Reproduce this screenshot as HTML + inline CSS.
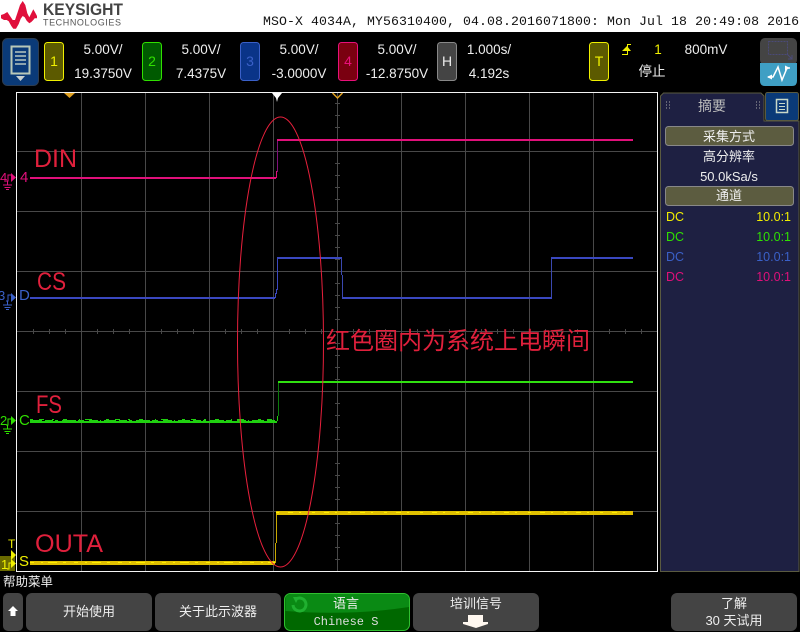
<!DOCTYPE html>
<html><head><meta charset="utf-8"><style>
html,body{margin:0;padding:0;background:#000;width:800px;height:632px;overflow:hidden}
svg{display:block}
text{font-family:"Liberation Sans","WenQuanYi Zen Hei","Noto Sans CJK SC",sans-serif}
.w{fill:#eee;font-size:13.5px}
.m{font-size:13px;fill:#eee;text-anchor:middle}
</style></head><body>
<svg width="800" height="632" viewBox="0 0 800 632" xmlns="http://www.w3.org/2000/svg">
<rect width="800" height="632" fill="#000"/>
<rect width="800" height="32" fill="#fff"/>
<!-- logo -->
<polygon points="1,15 4,14 7.300,12 10,16 12.700,20 15,20 17.300,13.300 20,5 22.700,1 25.300,5 27.300,13.300 29.300,17.300 31.300,13.300 33.300,9.300 35.300,12.700 37,16 37,18.300 34.700,18.300 33.300,20 31.300,22 29.300,23.300 26.700,20.700 24.700,17.300 22.700,16 20.700,18.700 18.700,24 16,28.700 13.300,28.700 11.300,26 8.700,21.300 6.700,20 4,20 1,18.300" fill="#e0103c"/>
<text x="43" y="15" font-size="16.500" font-weight="bold" fill="#444" textLength="80" lengthAdjust="spacingAndGlyphs">KEYSIGHT</text>
<text x="43" y="25.500" font-size="9" fill="#555" textLength="78" lengthAdjust="spacing">TECHNOLOGIES</text>
<text x="263" y="25" font-size="13.200" fill="#111" textLength="536" lengthAdjust="spacing" style="font-family:'Liberation Mono',monospace">MSO-X 4034A, MY56310400, 04.08.2016071800: Mon Jul 18 20:49:08 2016</text>

<!-- menu button -->
<rect x="2.500" y="38.500" width="36" height="47" rx="5" fill="#0a3a78" stroke="#2c3c50"/>
<rect x="11.500" y="46.500" width="18" height="27" fill="#0a3a78" stroke="#b8c8b8" stroke-width="2"/>
<path d="M15 52h11M15 56h11M15 60h11M15 64h11" stroke="#b8c8c0" stroke-width="1.500"/>
<polygon points="16,76 25,76 20.500,81" fill="#c8d0d0"/>

<!-- channel boxes -->
<g stroke-width="1">
<rect x="44.500" y="42.500" width="19" height="38" rx="3" fill="#5c5a00" stroke="#f0f000"/>
<rect x="142.500" y="42.500" width="19" height="38" rx="3" fill="#005a00" stroke="#30e000"/>
<rect x="240.500" y="42.500" width="19" height="38" rx="3" fill="#0a3488" stroke="#3a60c8"/>
<rect x="338.500" y="42.500" width="19" height="38" rx="3" fill="#7a0010" stroke="#e8107a"/>
<rect x="437.500" y="42.500" width="19" height="38" rx="3" fill="#444" stroke="#888"/>
<rect x="589.500" y="42.500" width="19" height="38" rx="3" fill="#5c5a00" stroke="#f0f000"/>
</g>
<g font-size="14">
<text x="54" y="66" fill="#f0f000" text-anchor="middle">1</text>
<text x="152" y="66" fill="#30e000" text-anchor="middle">2</text>
<text x="250" y="66" fill="#3a60c8" text-anchor="middle">3</text>
<text x="348" y="66" fill="#e8107a" text-anchor="middle">4</text>
<text x="447" y="66" fill="#eee" text-anchor="middle">H</text>
<text x="599" y="66" fill="#f0f000" text-anchor="middle">T</text>
</g>
<g class="w">
<text x="103" y="54" text-anchor="middle" class="w">5.00V/</text>
<text x="103" y="78" text-anchor="middle" class="w">19.3750V</text>
<text x="201" y="54" text-anchor="middle" class="w">5.00V/</text>
<text x="201" y="78" text-anchor="middle" class="w">7.4375V</text>
<text x="299" y="54" text-anchor="middle" class="w">5.00V/</text>
<text x="299" y="78" text-anchor="middle" class="w">-3.0000V</text>
<text x="397" y="54" text-anchor="middle" class="w">5.00V/</text>
<text x="397" y="78" text-anchor="middle" class="w">-12.8750V</text>
<text x="489" y="54" text-anchor="middle" class="w">1.000s/</text>
<text x="489" y="78" text-anchor="middle" class="w">4.192s</text>
<text x="706" y="54" text-anchor="middle" class="w">800mV</text>
<text x="652" y="76" text-anchor="middle" class="w">停止</text>
</g>
<text x="658" y="54" fill="#f0f000" font-size="13.500" text-anchor="middle">1</text>
<path d="M622 54.500h5.500V44.500h3.500" fill="none" stroke="#f0f000"/>
<polygon points="627,46 631,51 622,51" fill="#f0f000"/>

<!-- run mode button -->
<rect x="760" y="38" width="37" height="27" rx="5" fill="#444"/>
<path d="M760 63H797V81q0 5-5 5H765q-5 0-5-5Z" fill="#3f9fc4"/>
<rect x="768.500" y="41.500" width="19" height="13" fill="none" stroke="#4a4a78" stroke-dasharray="2 1"/>
<path d="M787 54l5 5M788 59h4v-4" stroke="#4a4a78" fill="none"/>
<path d="M768 77h5l5-10 4 13 5-12h3" stroke="#fff" stroke-width="1.500" fill="none"/>
<polygon points="790,68 785,65.500 785,70.500" fill="#fff"/>
<polygon points="767,77 772,74.500 772,79.500" fill="#fff"/>

<!-- grid -->
<g shape-rendering="crispEdges" stroke="#484848" stroke-width="1">
<path d="M81.500 93V571M145.500 93V571M209.500 93V571M273.500 93V571M337.500 93V571M401.500 93V571M465.500 93V571M529.500 93V571M593.500 93V571"/>
<path d="M17 151.500H657M17 211.500H657M17 271.500H657M17 331.500H657M17 391.500H657M17 451.500H657M17 511.500H657"/>
<path d="M33.500 329v5M49.500 329v5M65.500 329v5M97.500 329v5M113.500 329v5M129.500 329v5M161.500 329v5M177.500 329v5M193.500 329v5M225.500 329v5M241.500 329v5M257.500 329v5M289.500 329v5M305.500 329v5M321.500 329v5M353.500 329v5M369.500 329v5M385.500 329v5M417.500 329v5M433.500 329v5M449.500 329v5M481.500 329v5M497.500 329v5M513.500 329v5M545.500 329v5M561.500 329v5M577.500 329v5M609.500 329v5M625.500 329v5M641.500 329v5"/>
<path d="M335 103.500h5M335 115.500h5M335 127.500h5M335 139.500h5M335 163.500h5M335 175.500h5M335 187.500h5M335 199.500h5M335 223.500h5M335 235.500h5M335 247.500h5M335 259.500h5M335 283.500h5M335 295.500h5M335 307.500h5M335 319.500h5M335 343.500h5M335 355.500h5M335 367.500h5M335 379.500h5M335 403.500h5M335 415.500h5M335 427.500h5M335 439.500h5M335 463.500h5M335 475.500h5M335 487.500h5M335 499.500h5M335 523.500h5M335 535.500h5M335 547.500h5M335 559.500h5"/>
</g>
<rect x="16.500" y="92.500" width="641" height="479" fill="none" stroke="#f4f4f4" stroke-width="1" shape-rendering="crispEdges"/>

<!-- traces -->
<g fill="none" shape-rendering="crispEdges">
<path d="M30 178H276" stroke="#e0107a" stroke-width="2"/>
<path d="M276.500 178V171" stroke="#e0107a"/>
<path d="M277.500 172V140" stroke="#80107a"/>
<path d="M277 140H633" stroke="#e0107a" stroke-width="2"/>
<path d="M30 298H275" stroke="#3a48c0" stroke-width="2"/>
<path d="M275.500 298V293M276.500 294V289M277.500 290V258" stroke="#3a48c0"/>
<path d="M277 258H342" stroke="#3a48c0" stroke-width="2"/>
<path d="M341.500 258V275M342.500 275V298M551.500 298V258" stroke="#3a48b0"/>
<path d="M342 298H552" stroke="#3a48c0" stroke-width="2"/>
<path d="M551 258H633" stroke="#3a48c0" stroke-width="2"/>
<path d="M30 422H277" stroke="#20d010" stroke-width="2"/>
<path d="M30 420.500H277" stroke="#20d010" stroke-width="1" stroke-dasharray="12 3 8 2 3 4 14 2 6 5 9 2 1 3"/>
<path d="M30 419.500H277" stroke="#20d010" stroke-width="1" stroke-dasharray="3 6 5 8 2 9 4 12 1 5 7 14"/>
<path d="M277.500 421V416" stroke="#20d010"/>
<path d="M278.500 416V382" stroke="#0a7a0a"/>
<path d="M278 382H633" stroke="#30e010" stroke-width="2"/>
<path d="M30 563H275" stroke="#e0c000" stroke-width="4"/>
<path d="M30 562.500H275" stroke="#fff000" stroke-width="1" stroke-dasharray="4 7 2 5 9 6 3 8"/>
<path d="M275.500 563V543M276.500 543V513" stroke="#c8a800"/>
<path d="M276 513H633" stroke="#e0c000" stroke-width="4"/>
<path d="M276 512.500H633" stroke="#fff000" stroke-width="1" stroke-dasharray="3 9 5 6 2 11"/>
</g>
<ellipse cx="280.500" cy="342" rx="43" ry="225" fill="none" stroke="#e8203c" stroke-width="1"/>

<!-- top markers -->
<polygon points="64,93 75,93 69.500,98" fill="#e0a020"/>
<polygon points="272,93 282,93 278,98 277,102 276,98" fill="#fff"/>
<polyline points="332.500,93 337.500,98 342.500,93" fill="none" stroke="#e0a020" stroke-width="1.500"/>

<!-- annotations -->
<g fill="#e0203c" font-size="25">
<text x="34" y="167" textLength="43" lengthAdjust="spacingAndGlyphs">DIN</text>
<text x="37" y="290" textLength="29" lengthAdjust="spacingAndGlyphs">CS</text>
<text x="36" y="413" textLength="26" lengthAdjust="spacingAndGlyphs">FS</text>
<text x="35" y="552" textLength="68" lengthAdjust="spacingAndGlyphs">OUTA</text>
<text x="326" y="349" font-size="24">红色圈内为系统上电瞬间</text>
</g>

<!-- left labels -->
<g font-size="15">
<text x="20" y="182" fill="#e0107a">4</text>
<text x="19" y="300" fill="#3a60c8">D</text>
<text x="19" y="425" fill="#30e000">C</text>
<text x="19" y="566" fill="#f0f000">S</text>
</g>
<g font-size="13">
<text x="0" y="182" fill="#e0107a">4</text>
<text x="-2" y="300" fill="#3a60c8">3</text>
<text x="0" y="425" fill="#30e000">2</text>
</g>
<g fill="none">
<path d="M6 181h2v-6h3M7.500 181v4M3 185h9M4.500 187.500h6M6 189.500h3" stroke="#e0107a"/>
<path d="M6 301h2v-6h3M7.500 301v4M3 305h9M4.500 307.500h6M6 309.500h3" stroke="#3a60c8"/>
<path d="M6 425h2v-6h3M7.500 425v4M3 429h9M4.500 431.500h6M6 433.500h3" stroke="#30e000"/>
</g>
<polygon points="11,173 16,177.500 11,182" fill="#e0107a"/>
<polygon points="11,293 16,297.500 11,302" fill="#3a60c8"/>
<polygon points="11,416 16,420.500 11,425" fill="#30e000"/>
<rect x="0" y="556" width="15" height="15" fill="#6a6a00"/>
<text x="1" y="569" font-size="13" fill="#f0f000">1</text>
<path d="M7 569h2v-6h3" stroke="#f0f000" fill="none"/>
<polygon points="11,550 16,555 11,560" fill="#f0f000"/>
<polygon points="11,559 16,563.500 11,568" fill="#f0f000"/>
<text x="8" y="548" font-size="12" fill="#f0f000">T</text>

<!-- right panel -->
<path d="M660.500 571.500V96l3-3H761l3 3V121H799V571.500Z" fill="#1e2042" stroke="#5a5a40"/>
<rect x="764" y="92" width="3" height="3" fill="#000"/>
<rect x="765.500" y="92.500" width="33" height="28" rx="2" fill="#0a3a78" stroke="#5a5a40"/>
<rect x="776.500" y="99.500" width="11" height="13" fill="none" stroke="#c8d8c8" stroke-width="1.500"/>
<path d="M779 103.500h6M779 106.500h6M779 109.500h6" stroke="#c8d8c8"/>
<text x="712" y="111" font-size="14" fill="#bbb" text-anchor="middle">摘要</text>
<path d="M666 102h1M669 102h1M666 105h1M669 105h1M666 108h1M669 108h1M756 102h1M759 102h1M756 105h1M759 105h1M756 108h1M759 108h1" stroke="#aaa"/>
<rect x="665.500" y="126.500" width="128" height="19" rx="3" fill="#5c5c40" stroke="#888"/>
<rect x="665.500" y="186.500" width="128" height="19" rx="3" fill="#5c5c40" stroke="#888"/>
<text x="729" y="141" class="m">采集方式</text>
<text x="729" y="161" class="m">高分辨率</text>
<text x="729" y="181" class="m">50.0kSa/s</text>
<text x="729" y="200" class="m">通道</text>
<g font-size="12.500">
<text x="666" y="221" fill="#f0f000">DC</text><text x="791" y="221" fill="#f0f000" text-anchor="end">10.0:1</text>
<text x="666" y="241" fill="#30e000">DC</text><text x="791" y="241" fill="#30e000" text-anchor="end">10.0:1</text>
<text x="666" y="261" fill="#3a60c8">DC</text><text x="791" y="261" fill="#3a60c8" text-anchor="end">10.0:1</text>
<text x="666" y="281" fill="#e0107a">DC</text><text x="791" y="281" fill="#e0107a" text-anchor="end">10.0:1</text>
</g>

<!-- bottom softkeys -->
<text x="3" y="586" font-size="12.500" fill="#eee">帮助菜单</text>
<g fill="#444">
<rect x="3" y="593" width="20" height="38" rx="5"/>
<rect x="26" y="593" width="126" height="38" rx="6"/>
<rect x="155" y="593" width="126" height="38" rx="6"/>
<rect x="413" y="593" width="126" height="38" rx="6"/>
<rect x="671" y="593" width="126" height="38" rx="6"/>
</g>
<polygon points="13,606 18,611 15.500,611 15.500,616 10.500,616 10.500,611 8,611" fill="#fff"/>
<rect x="284.500" y="593.500" width="125" height="37" rx="6" fill="#006800" stroke="#30c030"/>
<path d="M285.500 600q0-6 6-6H403q6 0 6 6V607Q350 616 285.500 611Z" fill="#0a8a14"/>
<path d="M293 605a6.500 6.500 0 1 0 3-6" fill="none" stroke="#20b030" stroke-width="3"/>
<polygon points="293,597 299,597 296,603" fill="#20b030"/>
<text x="89" y="616" class="m">开始使用</text>
<text x="218" y="616" class="m">关于此示波器</text>
<text x="346" y="608" class="m">语言</text>
<text x="346" y="625" font-size="12" fill="#ddd" text-anchor="middle" style="font-family:'Liberation Mono',monospace">Chinese S</text>
<text x="476" y="608" class="m">培训信号</text>
<polygon points="468,615 483,615 483,622 488,622 488,624 476,628 463,624 463,622 468,622" fill="#fff8f0"/>
<text x="734" y="608" class="m">了解</text>
<text x="734" y="625" class="m">30 天试用</text>
</svg>
</body></html>
